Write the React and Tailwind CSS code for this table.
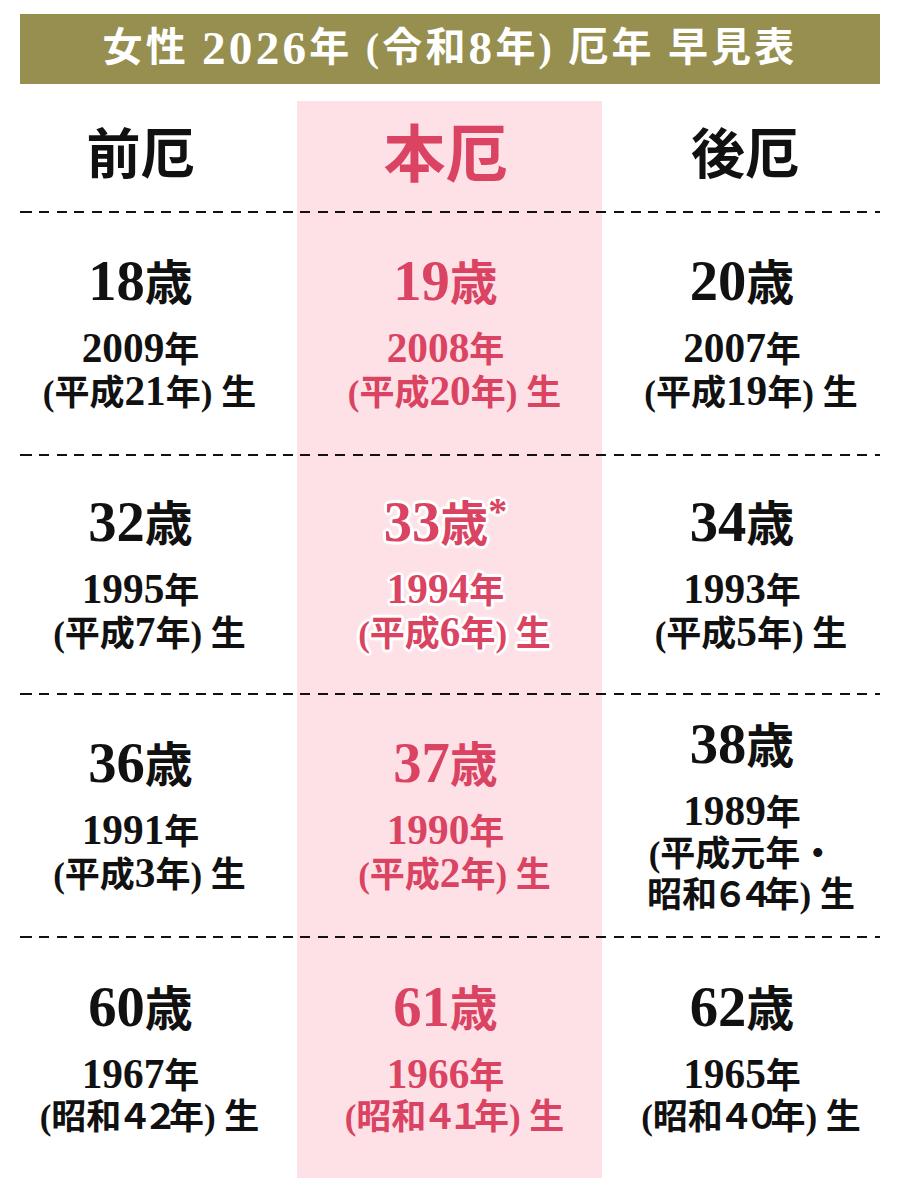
const rows = [
  {
    h: 'h-[241px]',
    cells: [
      { age: '18歳', lines: ['2009年', '(平成21年) 生'] },
      { age: '19歳', lines: ['2008年', '(平成20年) 生'] },
      { age: '20歳', lines: ['2007年', '(平成19年) 生'] },
    ],
  },
  {
    h: 'h-[237px]',
    cells: [
      { age: '32歳', lines: ['1995年', '(平成7年) 生'] },
      { age: '33歳', star: true, lines: ['1994年', '(平成6年) 生'] },
      { age: '34歳', lines: ['1993年', '(平成5年) 生'] },
    ],
  },
  {
    h: 'h-[241px]',
    cells: [
      { age: '36歳', lines: ['1991年', '(平成3年) 生'] },
      { age: '37歳', lines: ['1990年', '(平成2年) 生'] },
      { age: '38歳', lines: ['1989年', '(平成元年・', '昭和６４年) 生'] },
    ],
  },
  {
    h: 'h-[240px]',
    cells: [
      { age: '60歳', lines: ['1967年', '(昭和４２年) 生'] },
      { age: '61歳', lines: ['1966年', '(昭和４１年) 生'] },
      { age: '62歳', lines: ['1965年', '(昭和４０年) 生'] },
    ],
  },
];

const cols = 'grid grid-cols-[277px_305px_278px]';

// digits in the picture are set larger than the kanji around them
function Txt({ s }) {
  const parts = s.split(/([0-9]+|[０-９]+)/);
  return parts.map((p, i) => {
    if (/^[0-9]+$/.test(p)) return <span key={i} className="text-[1.18em]">{p}</span>;
    if (/^[０-９]+$/.test(p)) return <span key={i} className="ml-[-0.12em] tracking-[-0.26em]">{p}</span>;
    return p;
  });
}

function Dash() {
  return (
    <div className="h-[2px] bg-[image:repeating-linear-gradient(90deg,#111_0_10px,transparent_10px_17.4px)] bg-[position:2px_0]" />
  );
}

function Cell({ cell, pink, idx }) {
  const color = pink ? 'text-[#da4361]' : 'text-[#111]';
  const glow = cell.star
    ? '[text-shadow:3px_0_0_#fff,-3px_0_0_#fff,0_3px_0_#fff,0_-3px_0_#fff,2px_2px_0_#fff,-2px_-2px_0_#fff,2px_-2px_0_#fff,-2px_2px_0_#fff,0_0_6px_#fff]'
    : '';
  const shift = idx === 0 ? 'pr-[36px]' : idx === 1 ? 'pr-[8px]' : 'pl-[2px]';
  return (
    <div className={`flex flex-col items-center justify-center font-bold ${color} ${glow} ${shift}`}>
      <div className="text-[48px] leading-[56px]">
        <Txt s={cell.age} />
        {cell.star && <span className="inline-block align-top text-[38px] leading-[38px] mt-[-2px]">*</span>}
      </div>
      <div className="mt-[16px] text-[35px] leading-[41px] text-center">
        {cell.lines.map((l, i) => (
          <div key={i} className={i === cell.lines.length - 1 && l.endsWith('生') ? 'pl-[18px]' : ''}>
            <Txt s={l} />
          </div>
        ))}
      </div>
    </div>
  );
}

export default function App() {
  return (
    <div className="w-[900px] h-[1200px] bg-white px-[20px] pt-[14px] font-['Liberation_Serif','Noto_Sans_CJK_JP',serif]">
      <div className="h-[70px] bg-[#968f50] flex items-center justify-center text-white font-bold text-[40px] tracking-[0.08em] whitespace-pre pb-[2px]">
        <Txt s="女性 2026年 (令和8年) 厄年 早見表" />
      </div>

      <div className="mt-[17px] bg-[image:linear-gradient(90deg,transparent_277px,#fde1e7_277px,#fde1e7_582px,transparent_582px)]">
        <div className={`${cols} h-[110px] items-center font-bold leading-none`}>
          <div className="text-center pr-[36px] text-[54px] text-[#111]">前厄</div>
          <div className="text-center pr-[8px] text-[62px] text-[#da4361]">本厄</div>
          <div className="text-center pl-[8px] text-[54px] text-[#111]">後厄</div>
        </div>
        {rows.map((r, ri) => (
          <div key={ri}>
            <Dash />
            <div className={`${cols} ${r.h}`}>
              {r.cells.map((c, ci) => (
                <Cell key={ci} cell={c} pink={ci === 1} idx={ci} />
              ))}
            </div>
          </div>
        ))}
      </div>
    </div>
  );
}
